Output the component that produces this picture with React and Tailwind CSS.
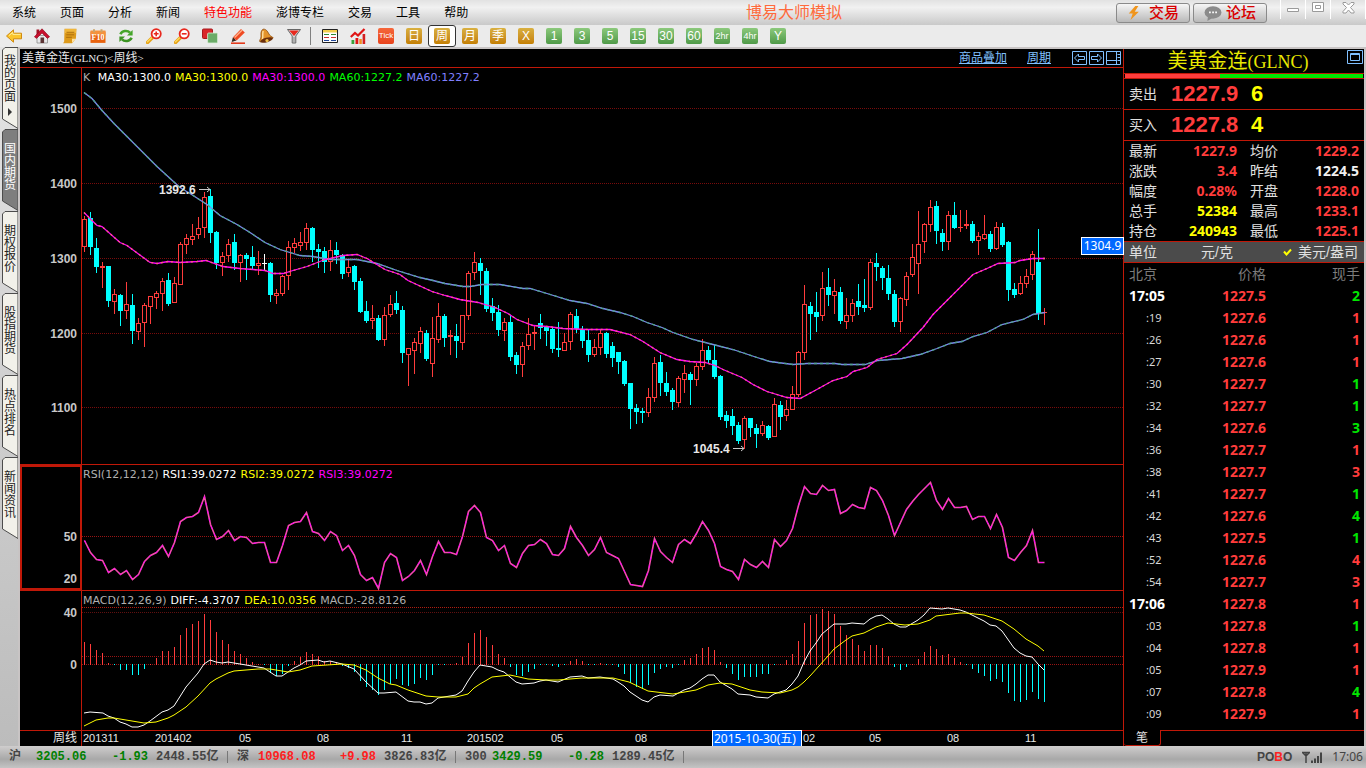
import React, { useState } from 'react';

const UI = 'font-["Liberation_Serif","Noto_Sans_CJK_SC",serif]';
const NUM = 'font-["Noto_Sans","Noto_Sans_CJK_SC",sans-serif]';
const WIDE = 'font-["DejaVu_Sans","Noto_Sans_CJK_SC",sans-serif]';
const ARIAL = 'font-["Liberation_Sans","Noto_Sans_CJK_SC",sans-serif]';
const MONO = 'font-["Liberation_Mono","Noto_Sans_CJK_SC",monospace]';

const STEP = 6;

// kind (u up, d down, w unchanged), high, body top, body bottom, low
const CANDLES = `u 148 151 179 184|d 144 150 179 187|d 170 180 199 205|u 194 198 200 220|d 198 198 233 239|u 221 226 234 246|d 226 227 243 258|u 214 236 243 251|d 226 237 263 276|u 250 255 264 272
u 235 237 255 279|u 228 228 239 256|u 223 225 230 241|u 210 213 226 243|d 205 212 236 238|u 209 215 235 235|u 174 176 217 217|u 166 170 177 186|u 156 168 172 177|u 149 160 167 171
u 124 129 160 170|d 121 128 165 175|d 163 164 195 201|u 184 188 195 208|u 171 176 188 194|d 166 174 195 202|u 186 187 195 214|d 185 187 191 212|d 178 189 198 201|u 183 195 198 207
w 186 195 196 203|d 194 195 227 234|u 221 225 228 236|u 207 208 226 228|u 173 179 208 222|u 170 175 180 185|u 164 174 178 183|u 155 160 175 182|d 159 160 182 194|d 176 181 184 200
d 179 183 194 205|u 172 182 194 203|d 174 182 187 196|d 186 187 206 211|u 192 199 205 209|d 197 198 214 222|d 210 213 244 245|d 233 243 253 255|u 237 250 253 261|d 247 250 272 273
u 239 247 272 278|u 227 236 247 249|d 223 235 242 246|d 238 242 285 295|u 280 280 287 318|u 270 274 283 306|u 259 263 276 285|d 262 265 291 293|u 249 270 296 309|u 235 248 272 275
d 246 248 270 279|u 262 267 269 287|d 256 268 273 290|u 247 247 275 282|u 203 205 248 252|u 184 194 205 212|d 190 195 203 227|d 200 203 241 244|d 230 238 245 253|d 237 244 262 268
u 250 254 263 273|d 247 254 289 293|d 284 287 297 306|u 274 278 297 309|u 250 266 278 282|u 257 264 266 282|d 246 255 260 271|d 258 259 263 278|d 259 261 281 285|d 254 280 282 289
u 265 274 283 283|u 244 246 274 282|d 241 248 261 265|d 258 261 273 280|d 261 272 287 294|u 271 279 287 289|u 262 265 280 287|d 264 265 286 290|d 274 278 290 299|d 284 284 294 306
d 292 293 316 318|d 315 315 341 361|d 336 340 344 356|d 340 343 345 355|u 320 329 345 349|u 289 295 330 334|d 287 294 315 328|d 304 315 324 328|d 320 322 334 342|u 308 310 335 339
u 297 305 312 325|d 304 306 312 337|u 295 298 312 318|u 271 282 299 302|d 278 282 292 296|d 277 292 309 311|d 307 308 349 352|d 343 347 353 360|d 341 348 358 367|d 354 357 373 376
u 348 350 372 381|d 350 350 360 369|d 356 360 366 380|u 353 357 366 368|d 357 358 370 372|u 330 336 369 369|d 333 337 349 362|u 332 341 348 353|u 318 326 342 342|u 283 284 327 329
u 217 236 285 292|d 234 238 246 272|d 224 244 249 264|u 204 220 248 253|d 200 219 227 238|u 211 223 228 246|d 219 224 253 256|u 230 247 254 261|u 231 235 248 254|d 216 233 239 247
d 211 237 240 244|u 191 194 240 242|d 185 195 199 213|d 198 200 210 222|d 197 210 226 232|d 222 226 254 259|u 229 230 254 264|u 204 208 232 238|u 176 189 207 209|u 143 176 196 226
u 155 156 174 185|u 132 139 157 164|d 133 138 163 176|d 161 165 174 183|u 143 147 174 182|d 134 147 160 161|u 142 159 160 164|u 142 156 158 161|d 153 156 173 175|u 164 168 173 187
u 147 166 171 172|d 163 166 181 184|u 154 159 181 182|d 155 159 177 179|d 173 174 222 233|d 215 221 227 230|u 208 215 226 227|u 201 208 216 220|u 183 186 207 212|d 161 194 246 252
u 240 244 245 257`.split(/[|\n]/).map((row) => {
    const [kind, ...v] = row.split(' ');
    return [kind, ...v.map(Number)];
});

const MA30 = '2,144 15,157 20,158 38,174 45,177 68,194 75,195 86,193 98,194 115,193 124,192 141,198 158,200 171,201 183,202 191,205 201,205 211,202 225,198 243,191 261,187 275,186 285,190 303,201 318,206 326,212 350,223 363,227 378,231 396,234 413,239 426,245 435,251 451,257 465,258 481,260 505,261 518,261 528,261 548,266 561,273 578,284 595,291 608,293 623,294 633,297 641,301 660,309 671,316 685,323 705,329 718,330 733,322 751,312 765,308 771,303 785,299 795,291 815,285 825,276 841,259 851,246 865,232 891,206 905,200 916,195 933,194 938,192 951,190 963,190';
const MA60 = '2,24 10,30 20,42 32,55 45,68 75,98 98,119 108,125 125,136 138,147 155,156 168,164 183,174 198,181 218,187 231,188 248,191 275,191 295,195 315,202 338,209 351,212 363,215 381,218 388,218 400,216 418,216 441,220 448,220 465,225 488,232 505,235 521,240 538,244 551,248 565,254 580,259 591,264 611,271 631,276 651,281 675,289 688,293 711,296 725,295 753,295 760,296 783,296 796,292 820,290 838,286 855,280 868,275 880,273 891,268 905,264 920,256 941,251 951,246 963,244';

const RSI = [
    75, 87, 94, 95, 107, 103, 109, 105, 114, 109, 96, 90, 87, 80, 91, 77, 56, 52, 51, 47,
    31, 59, 74, 71, 65, 75, 71, 72, 78, 77, 77, 97, 97, 80, 60, 57, 56, 47, 66, 68,
    75, 66, 70, 85, 80, 90, 109, 115, 112, 123, 97, 88, 92, 115, 111, 105, 95, 109, 91, 76,
    87, 87, 89, 71, 46, 40, 47, 72, 75, 85, 80, 98, 102, 88, 80, 79, 74, 78, 89, 90,
    83, 61, 72, 80, 90, 84, 72, 87, 90, 93, 106, 119, 120, 121, 105, 73, 86, 92, 97, 79,
    74, 78, 68, 56, 65, 78, 101, 104, 106, 114, 94, 99, 102, 96, 102, 74, 81, 75, 63, 40,
    21, 28, 29, 20, 25, 24, 48, 45, 39, 42, 43, 22, 25, 35, 50, 70, 57, 44, 36, 29,
    23, 17, 35, 44, 33, 42, 42, 41, 54, 51, 51, 63, 49, 62, 92, 95, 87, 80, 65, 97, 97,
];
const RSI_POINTS = RSI.map((y, i) => `${2 + i * STEP},${y}`).join(' ');

const HIST = [
    23, 21, 15, 12, 2, -1, -6, -6, -11, -11, -5, 1, 7, 14, 14, 18, 30, 37, 41, 44,
    51, 45, 33, 25, 21, 14, 11, 7, 3, 1, -1, -9, -12, -10, -2, 4, 8, 13, 11, 9,
    4, 4, 3, -2, -4, -8, -17, -23, -26, -31, -26, -20, -15, -21, -22, -20, -14, -16, -11, -1,
    0, 1, 2, 8, 22, 32, 35, 28, 20, 11, 7, -3, -11, -12, -8, -5, -1, 0, -2, -3,
    -1, 4, 6, 4, 0, -1, 2, 0, -1, -3, -10, -19, -23, -25, -21, -9, -5, -3, -4, -1,
    5, 7, 11, 17, 18, 15, 3, -4, -10, -16, -13, -13, -13, -10, -10, -1, 1, 5, 11, 24,
    42, 50, 51, 56, 54, 51, 39, 30, 26, 20, 14, 20, 20, 17, 9, -3, -6, -3, 1, 6,
    13, 19, 16, 10, 11, 7, 3, 0, -5, -9, -12, -17, -15, -18, -29, -37, -38, -36, -28, -35, -38,
];
const DIFF = '2,122 8,121 21,122 26,125 32,127 38,131 44,133 50,136 56,136 62,134 68,130 80,121 86,119 92,115 104,96 116,82 122,73 128,69 134,71 140,72 146,71 164,74 170,75 182,77 194,85 200,85 206,81 212,77 218,74 224,70 236,69 242,71 248,70 260,73 272,78 284,91 296,102 302,102 314,101 326,110 332,111 338,111 344,113 350,112 356,107 374,104 380,100 386,90 392,81 398,74 410,76 416,79 422,81 434,91 440,93 452,92 458,90 464,89 476,91 488,86 500,85 506,87 518,86 531,88 536,91 542,95 548,101 554,105 560,109 566,111 572,106 578,104 591,105 602,99 608,97 614,93 620,88 626,84 632,84 638,91 650,98 656,103 668,104 674,106 686,107 692,103 704,99 710,93 716,85 722,71 728,60 734,52 740,43 752,33 764,33 770,32 782,33 788,28 794,25 800,24 806,28 812,33 818,36 824,36 836,29 842,24 848,17 860,18 866,17 878,19 884,21 890,24 902,30 908,34 914,35 920,40 932,57 938,62 944,65 950,66 956,73 962,79';
const DEA = '2,135 8,132 14,129 26,127 32,127 44,129 62,132 74,131 86,127 92,124 104,116 116,105 128,92 134,88 146,82 152,80 176,78 188,78 206,81 218,79 230,75 260,73 272,74 284,79 296,87 308,93 314,94 326,99 344,105 356,106 374,106 386,103 392,97 398,93 410,86 428,84 446,88 464,89 476,89 500,87 531,87 547,91 566,100 591,103 614,99 626,94 638,92 650,93 668,99 680,101 698,102 710,99 716,96 722,91 728,85 746,65 752,58 764,49 770,45 782,42 794,36 806,32 823,34 836,33 848,29 854,25 878,22 884,22 902,24 920,30 932,38 944,48 956,55 962,60';

const TICKS = [
    ['17:05', '1227.5', 2, 'g'], [':19', '1227.6', 1, 'r'], [':26', '1227.6', 1, 'r'], [':27', '1227.6', 1, 'r'],
    [':30', '1227.7', 1, 'g'], [':32', '1227.7', 1, 'g'], [':34', '1227.6', 3, 'g'], [':36', '1227.7', 1, 'r'],
    [':38', '1227.7', 3, 'r'], [':41', '1227.7', 1, 'g'], [':42', '1227.6', 4, 'g'], [':43', '1227.5', 1, 'g'],
    [':52', '1227.6', 4, 'r'], [':54', '1227.7', 3, 'r'], ['17:06', '1227.8', 1, 'r'], [':03', '1227.8', 1, 'g'],
    [':04', '1227.8', 1, 'r'], [':05', '1227.9', 1, 'r'], [':07', '1227.8', 4, 'g'], [':09', '1227.9', 1, 'r'],
];

const QUOTES = [
    ['最新', '1227.9', 'text-[#ff3c3c]', '均价', '1229.2', 'text-[#ff3c3c]'],
    ['涨跌', '3.4', 'text-[#ff3c3c]', '昨结', '1224.5', 'text-[#f0f0f0]'],
    ['幅度', '0.28%', 'text-[#ff3c3c]', '开盘', '1228.0', 'text-[#ff3c3c]'],
    ['总手', '52384', 'text-[#ffff00]', '最高', '1233.1', 'text-[#ff3c3c]'],
    ['持仓', '240943', 'text-[#ffff00]', '最低', '1225.1', 'text-[#ff3c3c]'],
];

const MENU = ['系统', '页面', '分析', '新闻', '特色功能', '澎博专栏', '交易', '工具', '帮助'];
const SIDE_TABS = ['我的页面', '国内期货', '期权报价', '股指期货', '热点排名', '新闻资讯'];

const Svg = ({ children, size = 16 }) => (
    <svg width={size} height={size} viewBox="0 0 16 16" className="block shrink-0" aria-hidden="true">{children}</svg>
);

const Lens = ({ plus }) => (
    <Svg>
        <path d="M1.5 14.5 6 10" stroke="#e8a317" strokeWidth="3.4" strokeLinecap="round" />
        <path d="M1.5 13.8 5.5 9.8" stroke="#ffe066" strokeWidth="1.2" strokeLinecap="round" />
        <circle cx="10.2" cy="5.8" r="4.6" fill="#fff" stroke="#e8281e" strokeWidth="1.8" />
        <path d={plus ? 'M7.8 5.8h4.8M10.2 3.4v4.8' : 'M7.8 5.8h4.8'} stroke="#e8281e" strokeWidth="1.6" />
    </Svg>
);

const TOOLS = [
    ['后退', <Svg key="i"><path d="M.5 8 7.5 1.8v3.4h8v5.6h-8v3.4z" fill="#fbc52c" stroke="#d08a10" /><path d="M3 7.6 6.8 4.4v2h7.8" fill="none" stroke="#ffef9a" /></Svg>],
    ['首页', <Svg key="i"><path d="M3 7.5h10.5v7.5H3z" fill="#e8e8ea" stroke="#8b8b8b" strokeWidth=".8" /><path d="M6.5 9.5h3.6V15H6.5z" fill="#5c3434" /><path d="M2.5 1.5h2.8v3.4L2.5 7.4z" fill="#a31326" /><path d="M.4 8.8 8 .8l7.6 8-2.2 1.6L8 5 2.6 10.4z" fill="#c8102e" stroke="#8c0a1c" strokeWidth=".6" /></Svg>],
    ['公告', <Svg key="i"><path d="M2.5.8h12l-.6 9.7-3.8 4.7H1.2l1-2z" fill="#dd9a1c" /><path d="M3 1h11v4H3z" fill="#f0b63a" /><path d="M4.5 4.3h7.8M4.3 6.8h7.8M4.1 9.3h5.8" stroke="#a86b0a" strokeWidth=".9" /><path d="M10 15v-4.2h3.8z" fill="#ffe2a0" /></Svg>],
    ['F10', <Svg key="i"><path d="M.5 3.5h15v11.4h-15z" fill="#e8620f" /><path d="M.5 2.5h15v5H.5z" fill="#f5923d" /><path d="M3 1.2h2v3H3zM10.5 1.2h2v3h-2z" fill="#caa46a" /><text x="8" y="12.4" textAnchor="middle" fontSize="8" fontWeight="700" fill="#fff" fontFamily="Liberation Serif">F10</text></Svg>],
    ['刷新', <Svg key="i"><path d="M2.4 6.2C4 2.7 9.2 1.9 12 4.6" fill="none" stroke="#45a52a" strokeWidth="2.6" /><path d="M14.6 2v5.6H9z" fill="#45a52a" /><path d="M13.6 9.8C12 13.3 6.8 14.1 4 11.4" fill="none" stroke="#3c9423" strokeWidth="2.6" /><path d="M1.4 14V8.4H7z" fill="#3c9423" /></Svg>],
    ['放大', <Lens key="i" plus />],
    ['缩小', <Lens key="i" />],
    ['叠加', <Svg key="i"><rect x=".5" y="1" width="10" height="9.5" rx="1" fill="#d9262a" stroke="#a8191d" /><rect x="5.6" y="5" width="10" height="10" rx="1" fill="#6bab68" stroke="#d9eed8" strokeWidth=".8" /></Svg>],
    ['画线', <Svg key="i"><path d="M1 15.2h14" stroke="#e33a1c" strokeWidth="1.6" /><path d="m1.6 14 1.4-5 3.4 3.4z" fill="#3d2b20" /><path d="M3 9.2 11 1l3.8 3.4-8.2 8.2z" fill="#ef4a23" /><path d="m4.6 9.6 7.6-7.6" stroke="#ffb08a" strokeWidth="1.4" /></Svg>],
    ['预警', <Svg key="i"><path d="M5 1.2c3.8-.6 5 3.6 6.6 5.8 1 1.4 3 1.6 3.6 3L2 14c-1-1.6.8-3 1-5 .2-2.6-.8-5.6 2-7.8z" fill="#e4932a" stroke="#8a4708" strokeWidth=".8" /><path d="M5.2 3c-1 2.6 0 5-.6 8" fill="none" stroke="#ffe0a0" strokeWidth="1.4" /><ellipse cx="8.6" cy="12" rx="6.4" ry="2.3" fill="#6b2f0c" transform="rotate(-16 8.6 12)" /><circle cx="9" cy="12.6" r="1.6" fill="#f2c04a" /></Svg>],
    ['筛选', <Svg key="i"><path d="M1.5 1.5h13L9.8 8v7H6.2V8z" fill="#d8d8d8" stroke="#666" /><path d="M3.2 2.6h9.6L8 8z" fill="#e8281e" /><path d="M8 9v5.5" stroke="#888" /></Svg>],
    null,
    ['报价表', <Svg key="i"><path d="M.5 1.5h15v13H.5z" fill="#fff" stroke="#222" /><path d="M1 2h14v2.5H1z" fill="#f2cf4e" /><path d="M2 6.5h5M9 6.5h5" stroke="#2d8a33" strokeWidth="1.2" /><path d="M2 9.5h5M9 9.5h5" stroke="#c33" strokeWidth="1.2" /><path d="M2 12.5h5M9 12.5h5" stroke="#22479b" strokeWidth="1.2" /></Svg>],
    ['走势', <Svg key="i"><path d="M.8 9 5 5l3 2.5L14.5 1" fill="none" stroke="#e01515" strokeWidth="2.2" /><path d="M1.5 12h2.8v4H1.5z" fill="#3aa03a" /><path d="M5.5 10h2.8v6H5.5z" fill="#e01515" /><path d="M9.3 11h2.5v5H9.3z" fill="#f08c1e" /><path d="M12.6 6h2.6v10h-2.6z" fill="#d42020" /></Svg>],
];

const PERIODS = [
    ['Tick', 'o'], ['日', 'y'], ['周', 'y'], ['月', 'y'], ['季', 'y'], ['X', 'y'],
    ['1', 'g'], ['3', 'g'], ['5', 'g'], ['15', 'g'], ['30', 'g'], ['60', 'g'], ['2hr', 'g'], ['4hr', 'g'], ['Y', 'g'],
];

const TILE = {
    o: 'bg-linear-to-b from-[#f5663a] to-[#e8431c]',
    y: 'bg-linear-to-b from-[#d9b040] to-[#c47f00]',
    g: 'bg-linear-to-b from-[#8cc97c] to-[#4f9a48]',
};

const tileText = (label) => {
    if (label.length > 3) return 'text-[8px]';
    return label.length > 2 ? 'text-[9px]' : 'text-xs';
};

const MenuBar = () => (
    <header className={`flex h-[25px] items-center bg-linear-to-b from-[#e2e2e2] via-[#f1f1f1] via-30% to-[#c9c9c9] pl-3 ${ARIAL}`}>
        <nav className="flex gap-6 text-xs leading-6 text-black">
            {MENU.map((m) => (
                <button key={m} className={m === '特色功能' ? 'text-[#ff0000]' : ''}>{m}</button>
            ))}
        </nav>
        <h1 className="flex-1 pl-1 text-center text-base leading-6 text-[#ff6a3c]">博易大师模拟</h1>
        <div className="flex gap-[3px]">
            <button className="flex h-5 w-[74px] items-center justify-center gap-2 rounded-[3px] border border-[#8a8a8a] bg-linear-to-b from-[#f6f6f6] to-[#b9b9b9] text-[15px] leading-none font-medium text-[#d90000]">
                <Svg size={14}><path d="M9.5 0 2 8.5h4.5L4 16l9.5-9.5H8.8L13 0z" fill="#f0951c" /></Svg>
                交易
            </button>
            <button className="flex h-5 w-[74px] items-center justify-center gap-1 rounded-[3px] border border-[#8a8a8a] bg-linear-to-b from-[#f6f6f6] to-[#b9b9b9] text-[15px] leading-none font-medium text-[#d90000]">
                <Svg size={18}><ellipse cx="8" cy="7.5" rx="7.5" ry="5.5" fill="#8b8b8b" /><path d="m3.5 11-.5 4 4.500-2.500z" fill="#8b8b8b" /><path d="M4.500 7.500h1.500M7.300 7.500h1.500M10 7.500h1.500" stroke="#fff" strokeWidth="1.5" /></Svg>
                论坛
            </button>
        </div>
        <div className="ml-[13px] flex h-[19px] self-start text-[#9a9a9a]">
            <button aria-label="最小化" className="flex w-[25px] items-start justify-center border-l border-white pt-2">
                <svg width="12" height="4"><path d="M.5.5h11v3H.5z" fill="#fff" stroke="currentColor" /></svg>
            </button>
            <button aria-label="最大化" className="flex w-[25px] items-start justify-center border-l border-white pt-[2px]">
                <svg width="12" height="11"><path d="M.5.5h11v9H.5z" fill="#fff" stroke="currentColor" /><path d="M3.5 3.5h5v3h-5z" fill="none" stroke="currentColor" /></svg>
            </button>
            <button aria-label="关闭" className="flex w-[36px] items-start justify-center border-x border-white pt-[2px]">
                <svg width="13" height="12"><path d="m1 .5h3L6.500 3 9 .5h3V2L8.500 5.500 12 9.500V11H9L6.500 8 4 11H1V9.500L4.500 5.500 1 2z" fill="#fff" stroke="currentColor" /></svg>
            </button>
        </div>
    </header>
);

const Toolbar = ({ period, setPeriod }) => (
    <div className={`flex h-[22px] items-center bg-[#ebebeb] ${ARIAL}`}>
        {TOOLS.map((t, i) => t ? (
            <button key={t[0]} title={t[0]} className="flex h-full w-7 items-center justify-center">{t[1]}</button>
        ) : (
            <span key={i} className="h-[18px] w-2 pl-[2px]"><span className="block h-full w-px bg-[#808080]" /></span>
        ))}
        {PERIODS.map(([label, tone]) => (
            <button key={label} onClick={() => setPeriod(label)} className={`flex h-full w-7 items-center justify-center rounded-[3px] ${period === label ? 'border border-[#333] bg-white' : ''}`}>
                <span className={`flex h-4 w-4 items-center justify-center overflow-hidden rounded-[2px] leading-none text-white ${tileText(label)} ${TILE[tone]}`}>{label}</span>
            </button>
        ))}
    </div>
);

const SideTabs = ({ active, setActive }) => (
    <nav className="flex w-[18px] shrink-0 flex-col bg-linear-to-b from-[#e4e4e4] to-[#bcbcbc] pl-[2px]">
        {SIDE_TABS.map((tab, i) => (
            <button key={tab} onClick={() => setActive(tab)} className="relative h-[82px] w-4">
                <svg width="16" height="82" className="absolute inset-0">
                    <path d="M16 .5H3L.5 3v69L16 81.5z" fill={active === tab ? '#7e7e7e' : '#f2f1ea'} stroke="#4c4c4c" />
                </svg>
                <span className={`relative flex h-full flex-col items-center text-xs leading-3 ${i === 0 ? 'pt-2' : 'pt-[14px]'} ${active === tab ? 'text-white' : 'text-[#222]'} ${ARIAL}`}>
                    {tab.split('').map((c, k) => <span key={k}>{c}</span>)}
                    {i === 0 && <svg width="4" height="8" className="mt-[5px]"><path d="M0 0v8l4-4z" fill="#333" /></svg>}
                </span>
            </button>
        ))}
    </nav>
);

const Grid = ({ y, stroke = '#981414' }) => (
    <line x1="0" x2="100%" y1={y + 0.5} y2={y + 0.5} stroke={stroke} strokeDasharray="1 1" />
);

const Axis = ({ labels }) => (
    <svg className={`block h-full w-full ${ARIAL}`} fill="#c8c8c8" fontSize="12" fontWeight="700" textAnchor="end">
        {labels.map(([t, y]) => <text key={t} x="57" y={y}>{t}</text>)}
    </svg>
);

const Legend = ({ items }) => (
    <div className={`flex h-5 gap-1 pl-[1px] text-[11px] leading-5 whitespace-pre ${WIDE}`}>
        {items.map(([t, c], i) => <span key={i} className={c}>{t}</span>)}
    </div>
);

const KChart = () => (
    <div className="flex min-h-[397px] flex-1 border-b border-[#c01808]">
        <div className="w-[62px] shrink-0 border-r border-[#c01808]">
            <Axis labels={[['1500', 45], ['1400', 120], ['1300', 195], ['1200', 270], ['1100', 344]]} />
        </div>
        <div className="relative min-w-0 flex-1">
            <Legend items={[['K ', 'text-[#b0b0b0]'], ['MA30:1300.0', 'text-white'], ['MA30:1300.0', 'text-[#ffff00]'], ['MA30:1300.0', 'text-[#ff00ff]'], ['MA60:1227.2', 'text-[#00ff00]'], ['MA60:1227.2', 'text-[#8080ff]']]} />
            <svg className="block h-[376px] w-full overflow-hidden">
                <g transform="translate(0 -20)">
                    <g shapeRendering="crispEdges">
                        {[40, 115, 190, 265, 339].map((y) => <Grid key={y} y={y} stroke="#780c0c" />)}
                        {CANDLES.map(([kind, h, t, b, l], i) => {
                            const x = i * STEP;
                            const color = kind === 'u' ? '#ff3c3c' : kind === 'd' ? '#00ffff' : '#ffffff';
                            return (
                                <g key={i} fill={color}>
                                    <rect x={x + 2} y={h} width="1" height={l - h} />
                                    <rect x={x} y={t} width="5" height={b - t} />
                                    {kind === 'u' && b - t > 2 && <rect x={x + 1} y={t + 1} width="3" height={b - t - 2} fill="#000" />}
                                </g>
                            );
                        })}
                    </g>
                    <g fill="none" transform="translate(0 .5)">
                        <polyline points={MA60} stroke="#7c88f0" strokeWidth="1.3" />
                        <polyline points={MA60} stroke="#4fa58c" strokeWidth="1.3" strokeDasharray="3 3" />
                        <polyline points={MA30} stroke="#ff00ff" strokeWidth="1.3" />
                        <polyline points={MA30} stroke="#ff6478" strokeWidth="1.3" strokeDasharray="2 3" />
                    </g>
                    <g className={ARIAL} fontSize="12" fontWeight="700" fill="#e8e8e8">
                        <text x="77" y="126">1392.6</text>
                        <text x="611" y="385">1045.4</text>
                    </g>
                    <path d="M117 121.5h11M125 119l3 2.5-3 2.5M651 380.5h11M659 378l3 2.5-3 2.5" fill="none" stroke="#c8c8c8" />
                </g>
            </svg>
            <span className={`absolute top-[169px] -right-px z-10 h-[18px] w-[43px] border border-white bg-[#0068ff] text-center text-xs leading-4 text-white ${NUM}`}>1304.9</span>
        </div>
    </div>
);

const RsiChart = () => (
    <div className="flex h-[126px] border-b border-[#c01808]">
        <div className="w-[62px] shrink-0 border-2 border-[#c01808]">
            <svg className={`block h-full w-full ${ARIAL}`} fill="#c8c8c8" fontSize="12" fontWeight="700" textAnchor="end">
                <text x="55" y="74">50</text>
                <text x="55" y="116">20</text>
            </svg>
        </div>
        <div className="min-w-0 flex-1">
            <Legend items={[['RSI(12,12,12)', 'text-[#b0b0b0]'], ['RSI1:39.0272', 'text-white'], ['RSI2:39.0272', 'text-[#ffff00]'], ['RSI3:39.0272', 'text-[#ff00ff]']]} />
            <svg className="block h-[105px] w-full overflow-visible">
                <g transform="translate(0 -20)">
                    <g shapeRendering="crispEdges"><Grid y={71} /></g>
                    <g fill="none" transform="translate(.5 .5)">
                        <polyline points={RSI_POINTS} stroke="#f44cae" strokeWidth="1.6" />
                        <polyline points={RSI_POINTS} stroke="#ff00ff" strokeDasharray="3 5" />
                    </g>
                </g>
            </svg>
        </div>
    </div>
);

const MacdChart = () => (
    <div className="flex h-[140px] border-b border-[#c01808]">
        <div className="w-[62px] shrink-0 border-r border-[#c01808]">
            <Axis labels={[['40', 26], ['0', 78]]} />
        </div>
        <div className="min-w-0 flex-1">
            <Legend items={[['MACD(12,26,9)', 'text-[#b0b0b0]'], ['DIFF:-4.3707', 'text-white'], ['DEA:10.0356', 'text-[#ffff00]'], ['MACD:-28.8126', 'text-[#b0b0b0]']]} />
            <svg className="block h-[119px] w-full overflow-visible">
                <g transform="translate(0 -20)">
                    <g shapeRendering="crispEdges">
                        <Grid y={16} stroke="#b01c10" />
                        <Grid y={21} stroke="#601010" />
                        <Grid y={65} />
                        <Grid y={73} />
                        {HIST.map((v, i) => (
                            <rect key={i} x={2 + i * STEP} y={v > 0 ? 74 - v : 73} width="1" height={Math.max(Math.abs(v), 1)} fill={v > 0 ? '#ff3c3c' : '#00ffff'} />
                        ))}
                    </g>
                    <polyline points={DIFF} fill="none" stroke="#ffffff" />
                    <polyline points={DEA} fill="none" stroke="#ffff00" />
                </g>
            </svg>
        </div>
    </div>
);

const DATES = [['201311', 1], ['201402', 73], ['05', 157], ['08', 235], ['11', 319], ['201502', 385], ['05', 469], ['08', 553], ['02', 721], ['05', 787], ['08', 865], ['11', 943]];

const TimeAxis = () => (
    <div className={`flex h-[15px] text-[#e8e8e8] ${ARIAL}`}>
        <div className="w-[62px] shrink-0 border-r border-[#c01808] pr-1 text-right text-xs leading-[14px]">周线</div>
        <div className="relative min-w-0 flex-1">
            <svg className="block h-[15px] w-full" fill="#e8e8e8" fontSize="11">
                {DATES.map(([t, x]) => <text key={x} x={x} y="11">{t}</text>)}
            </svg>
            <span className={`absolute -top-px left-[630px] h-4 w-[90px] overflow-hidden border border-b-0 border-white bg-[#0068ff] pl-px text-xs leading-[15px] whitespace-nowrap text-white ${NUM}`}>2015-10-30(五)</span>
        </div>
    </div>
);

const ChartPane = () => (
    <section className="flex min-w-0 flex-1 flex-col border-r border-[#c01808]">
        <div className={`flex h-[19px] items-center border-b border-[#c01808] pl-[2px] leading-[18px] text-[#e8e8e8] ${UI}`}>
            <h2 className="text-xs leading-[18px]">美黄金连<span className="text-[11px]">(GLNC)&lt;</span>周线<span className="text-[11px]">&gt;</span></h2>
            <div className="ml-auto flex items-center text-xs text-[#80c0ff]">
                <a href="#overlay" className="underline">商品叠加</a>
                <a href="#period" className="ml-5 underline">周期</a>
                <div className="ml-[21px] flex gap-[2px] pr-[2px]">
                    <button aria-label="向左"><svg width="15" height="14" fill="none" stroke="currentColor"><path d="M.5.5h14v13H.5zM2.5 7l4-4v2.5h6v3h-6V11z" /></svg></button>
                    <button aria-label="向右"><svg width="15" height="14" fill="none" stroke="currentColor"><path d="M.5.5h14v13H.5zM12.5 7l-4-4v2.5h-6v3h6V11z" /></svg></button>
                    <button aria-label="布局"><svg width="15" height="14" fill="none" stroke="currentColor"><path d="M.5.5h14v13H.5zM10.5 0v14M0 9.5h10M11.5 3.5H14M11.5 6.5H14M11.5 9.5H14" /></svg></button>
                </div>
            </div>
        </div>
        <KChart />
        <RsiChart />
        <MacdChart />
        <TimeAxis />
    </section>
);

const Deal = ({ label, price, qty }) => (
    <div className="flex h-[31px] items-center border-b border-[#c01808] pl-[5px] leading-[30px]">
        <span className="w-[42px] text-sm leading-[30px] text-[#e0e0e0]">{label}</span>
        <span className="w-20 text-[22px] font-bold text-[#ff3c3c]">{price}</span>
        <span className="text-[22px] font-bold text-[#ffff00]">{qty}</span>
    </div>
);

const QuotePanel = () => (
    <aside className={`flex w-60 shrink-0 flex-col text-sm text-[#e0e0e0] ${ARIAL}`}>
        <div className="relative h-[25px] border-b border-[#c01808] pr-3 text-center">
            <h2 className={`text-xl leading-6 text-[#e8e800] ${UI}`}>美黄金连<span className="text-lg leading-6">(GLNC)</span></h2>
            <button aria-label="还原" className="absolute top-[1px] right-[1px] text-[#80c0ff]">
                <svg width="16" height="14" fill="none" stroke="currentColor"><path d="M.5.5h15v13H.5z" /><path d="M3.5 3.5h9v7h-9zM3.5 4.5h9" /></svg>
            </button>
        </div>
        <div className="flex h-[5px] border-b border-[#c01808] px-px">
            <span className="w-2/5 bg-[#ff3c3c]" />
            <span className="flex-1 bg-[#00e600]" />
        </div>
        <Deal label="卖出" price="1227.9" qty="6" />
        <Deal label="买入" price="1227.8" qty="4" />
        <dl className="grid h-[101px] grid-cols-[36px_72px_50px_72px] border-b border-[#c01808] pl-[5px] leading-5">
            {QUOTES.map(([a, av, ac, b, bv, bc]) => (
                <React.Fragment key={a}>
                    <dt>{a}</dt>
                    <dd className={`text-right font-bold ${ac} ${NUM}`}>{av}</dd>
                    <dt className="pl-[13px]">{b}</dt>
                    <dd className={`text-right font-bold ${bc} ${NUM}`}>{bv}</dd>
                </React.Fragment>
            ))}
        </dl>
        <div className="flex h-[21px] items-center border-b border-[#c01808] bg-[#4b4b4b] pr-[6px] pl-[5px] leading-5">
            <span className="w-[72px]">单位</span>
            <button>元/克</button>
            <button className="ml-auto flex items-center gap-1.5">
                <svg width="9" height="8"><path d="M1 3.5 3.5 6.5 8 1.5" fill="none" stroke="#ffff00" strokeWidth="2" /></svg>
                美元/盎司
            </button>
        </div>
        <table className="w-full table-fixed border-collapse leading-[22px]">
            <thead>
                <tr className="h-[22px] text-[#7c7c7c]">
                    <th className="w-[61px] p-0 pl-[5px] text-left font-normal">北京</th>
                    <th className="w-[81px] p-0 text-right font-normal">价格</th>
                    <th className="p-0 pr-1 text-right font-normal">现手</th>
                </tr>
            </thead>
            <tbody className={NUM}>
                {TICKS.map(([time, price, vol, side]) => (
                    <tr key={time} className="h-[22px] font-bold">
                        {time.length > 3 ? (
                            <td className="p-0 pl-[5px] text-white">{time}</td>
                        ) : (
                            <td className="p-0 pl-[22px] text-[11px] font-normal text-[#d8d8d8]">{time}</td>
                        )}
                        <td className="p-0 text-right text-[#ff3c3c]">{price}</td>
                        <td className={`p-0 pr-1 text-right ${side === 'g' ? 'text-[#00e600]' : 'text-[#ff3c3c]'}`}>{vol}</td>
                    </tr>
                ))}
            </tbody>
        </table>
        <div className="mt-auto flex h-4">
            <button className="h-4 w-[37px] rounded-b-[3px] border-r border-b border-[#c01808] text-xs leading-[14px]">笔</button>
            <span className="flex-1 border-t border-[#c01808]" />
        </div>
    </aside>
);

const INDICES = [
    ['沪', '3205.06', '-1.93', '2448.55亿', 'text-[#008000]'],
    ['深', '10968.08', '+9.98', '3826.83亿', 'text-[#ff2020]'],
    ['300', '3429.59', '-0.28', '1289.45亿', 'text-[#008000]'],
];

const StatusBar = () => (
    <footer className={`flex h-[22px] items-center bg-linear-to-b from-[#cfcdcd] via-[#a8a8a8] via-60% to-[#c4c4c4] pl-[9px] text-xs leading-[22px] font-bold text-[#444] ${MONO}`}>
        {INDICES.map(([name, price, chg, amount, color], i) => (
            <div key={name} className="flex w-[228px] items-center whitespace-nowrap">
                <div className="flex w-[139px]">
                    <span className={i === 1 ? 'w-[21px]' : 'w-[27px]'}>{name}</span>
                    <span className={color}>{price}</span>
                    <span className={`ml-auto ${color}`}>{chg}</span>
                </div>
                <span className="pl-2">{amount}</span>
                <span className="mr-[9px] ml-auto h-3 w-px bg-[#777]" />
            </div>
        ))}
        <div className={`ml-auto flex items-center pr-[3px] text-xs ${NUM}`}>
            <span className={ARIAL}>PO<span className="text-[#ff2020]">B</span>O</span>
            <svg width="22" height="12" className="mr-[9px] ml-[9px]" fill="none" stroke="#444"><path d="M1 1.5h8M1.5 1.5 5 5l3.5-3.5M5 1v11" strokeWidth="1.5" /><path d="M11 12V9.5M14 12V7.5M17 12V5M20 12V1.5" strokeWidth="2" /></svg>
            <span className="font-normal">17:06</span>
        </div>
    </footer>
);

export default function App() {
    const [period, setPeriod] = useState('周');
    const [tab, setTab] = useState('国内期货');

    return (
        <div className="flex min-h-screen flex-col bg-[#ebebeb]">
            <MenuBar />
            <Toolbar period={period} setPeriod={setPeriod} />
            <main className="flex flex-1">
                <SideTabs active={tab} setActive={setTab} />
                <div className="flex min-w-0 flex-1 border-x-2 border-t-2 border-[#c8c4c4] bg-black">
                    <ChartPane />
                    <QuotePanel />
                </div>
            </main>
            <StatusBar />
        </div>
    );
}
